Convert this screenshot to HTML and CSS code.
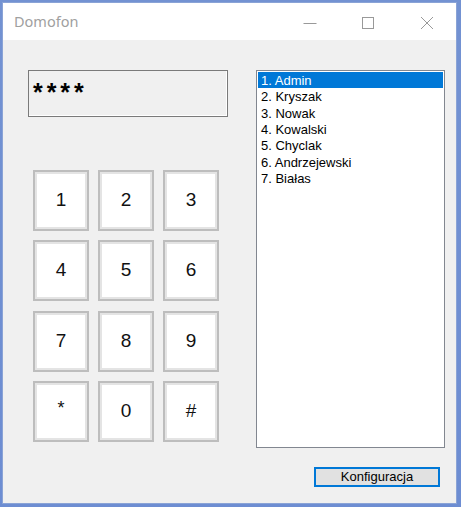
FILE: index.html
```html
<!DOCTYPE html>
<html lang="pl">
<head>
<meta charset="utf-8">
<title>Domofon</title>
<link rel="stylesheet" href="styles.css">
</head>
<body>
<div class="window">
  <div class="titlebar">
    <div class="title">Domofon</div>
    <div class="controls">
      <div class="ctl"><svg width="14" height="14" viewBox="0 0 14 14"><line x1="0.5" y1="7.5" x2="13.5" y2="7.5" stroke="#999" stroke-width="1"/></svg></div>
      <div class="ctl"><svg width="14" height="14" viewBox="0 0 14 14"><rect x="1.5" y="1.5" width="11" height="11" fill="none" stroke="#999" stroke-width="1"/></svg></div>
      <div class="ctl"><svg width="14" height="14" viewBox="0 0 14 14"><path d="M1 1 L13 13 M13 1 L1 13" stroke="#999" stroke-width="1" fill="none"/></svg></div>
    </div>
  </div>
  <div class="client">
    <div class="left">
      <div class="display">****</div>
      <div class="keypad">
        <button class="key">1</button>
        <button class="key">2</button>
        <button class="key">3</button>
        <button class="key">4</button>
        <button class="key">5</button>
        <button class="key">6</button>
        <button class="key">7</button>
        <button class="key">8</button>
        <button class="key">9</button>
        <button class="key key-star">*</button>
        <button class="key">0</button>
        <button class="key">#</button>
      </div>
    </div>
    <div class="right">
      <ul class="listbox">
        <li class="item selected">1. Admin</li>
        <li class="item">2. Kryszak</li>
        <li class="item">3. Nowak</li>
        <li class="item">4. Kowalski</li>
        <li class="item">5. Chyclak</li>
        <li class="item">6. Andrzejewski</li>
        <li class="item">7. Białas</li>
      </ul>
      <div class="actions">
        <button class="config">Konfiguracja</button>
      </div>
    </div>
  </div>
</div>
</body>
</html>
```
FILE: styles.css
```css
html, body {
  margin: 0;
  padding: 0;
}
body {
  width: 461px;
  height: 507px;
  overflow: hidden;
  background: linear-gradient(180deg, #7392d2 0%, #6d8dd2 100%);
  font-family: "Liberation Sans", Arial, sans-serif;
}
.window {
  box-sizing: border-box;
  margin: 3px 0 0 3px;
  width: 453px;
  height: 500px;
  background: #f0f0f0;
  box-shadow: 0 0 0 1px #8aa3d6;
  display: flex;
  flex-direction: column;
}
.titlebar {
  height: 37px;
  background: #ffffff;
  display: flex;
  align-items: center;
  justify-content: space-between;
}
.title {
  padding-left: 11px;
  font-family: "Noto Sans", "Open Sans", sans-serif;
  font-size: 14.5px;
  color: #a0a0a0;
  padding-bottom: 1px;
}
.controls {
  display: flex;
  height: 100%;
}
.ctl {
  width: 58.5px;
  display: flex;
  align-items: center;
  justify-content: center;
  padding-top: 2px;
}
.ctl svg { display: block; }

.client {
  flex: 1;
  display: flex;
  padding: 30px 0 0 25px;
}
.left {
  width: 200px;
  display: flex;
  flex-direction: column;
}
.display {
  box-sizing: border-box;
  height: 47px;
  border: 1px solid #7a7a7a;
  box-shadow: inset -1px -1px 0 #ffffff, inset 1px 1px 0 #f0f0f0;
  background: #f0f0f0;
  padding: 8px 0 0 4px;
  font-family: "Liberation Sans", Arial, sans-serif;
  font-weight: bold;
  font-size: 25px;
  line-height: 26px;
  letter-spacing: 3.9px;
  color: #000;
}
.keypad {
  margin: 53px 0 0 5px;
  display: grid;
  grid-template-columns: repeat(3, 56px);
  grid-auto-rows: 61px;
  column-gap: 9px;
  row-gap: 9.33px;
}
.key {
  box-sizing: border-box;
  margin: 0;
  padding: 0;
  background: #ffffff;
  border: 2px solid #bdbdbd;
  box-shadow: inset 0 0 0 2px #e4e4e4;
  font-family: "Liberation Sans", Arial, sans-serif;
  font-size: 19px;
  color: #111;
  display: flex;
  align-items: center;
  justify-content: center;
  padding-bottom: 1px;
}
.key-star {
  font-size: 18px;
  padding-bottom: 5px;
}
.right {
  margin-left: 28px;
  display: flex;
  flex-direction: column;
}
.listbox {
  box-sizing: border-box;
  list-style: none;
  margin: 0;
  width: 189px;
  height: 378px;
  padding: 1px;
  background: #ffffff;
  border: 1px solid #828790;
}
.item {
  height: 16.33px;
  line-height: 17px;
  padding-left: 3px;
  font-size: 13px;
  color: #000;
  white-space: nowrap;
}
.item.selected {
  background: #0078d7;
  color: #ffffff;
}
.actions {
  display: flex;
  justify-content: flex-end;
  margin-top: 19px;
  padding-right: 5px;
}
.config {
  box-sizing: border-box;
  margin: 0;
  width: 126px;
  height: 20px;
  padding: 0 0 1px 0;
  background: #e1e1e1;
  border: 2px solid #0078d7;
  font-family: "Liberation Sans", Arial, sans-serif;
  font-size: 13px;
  color: #000;
}
```
